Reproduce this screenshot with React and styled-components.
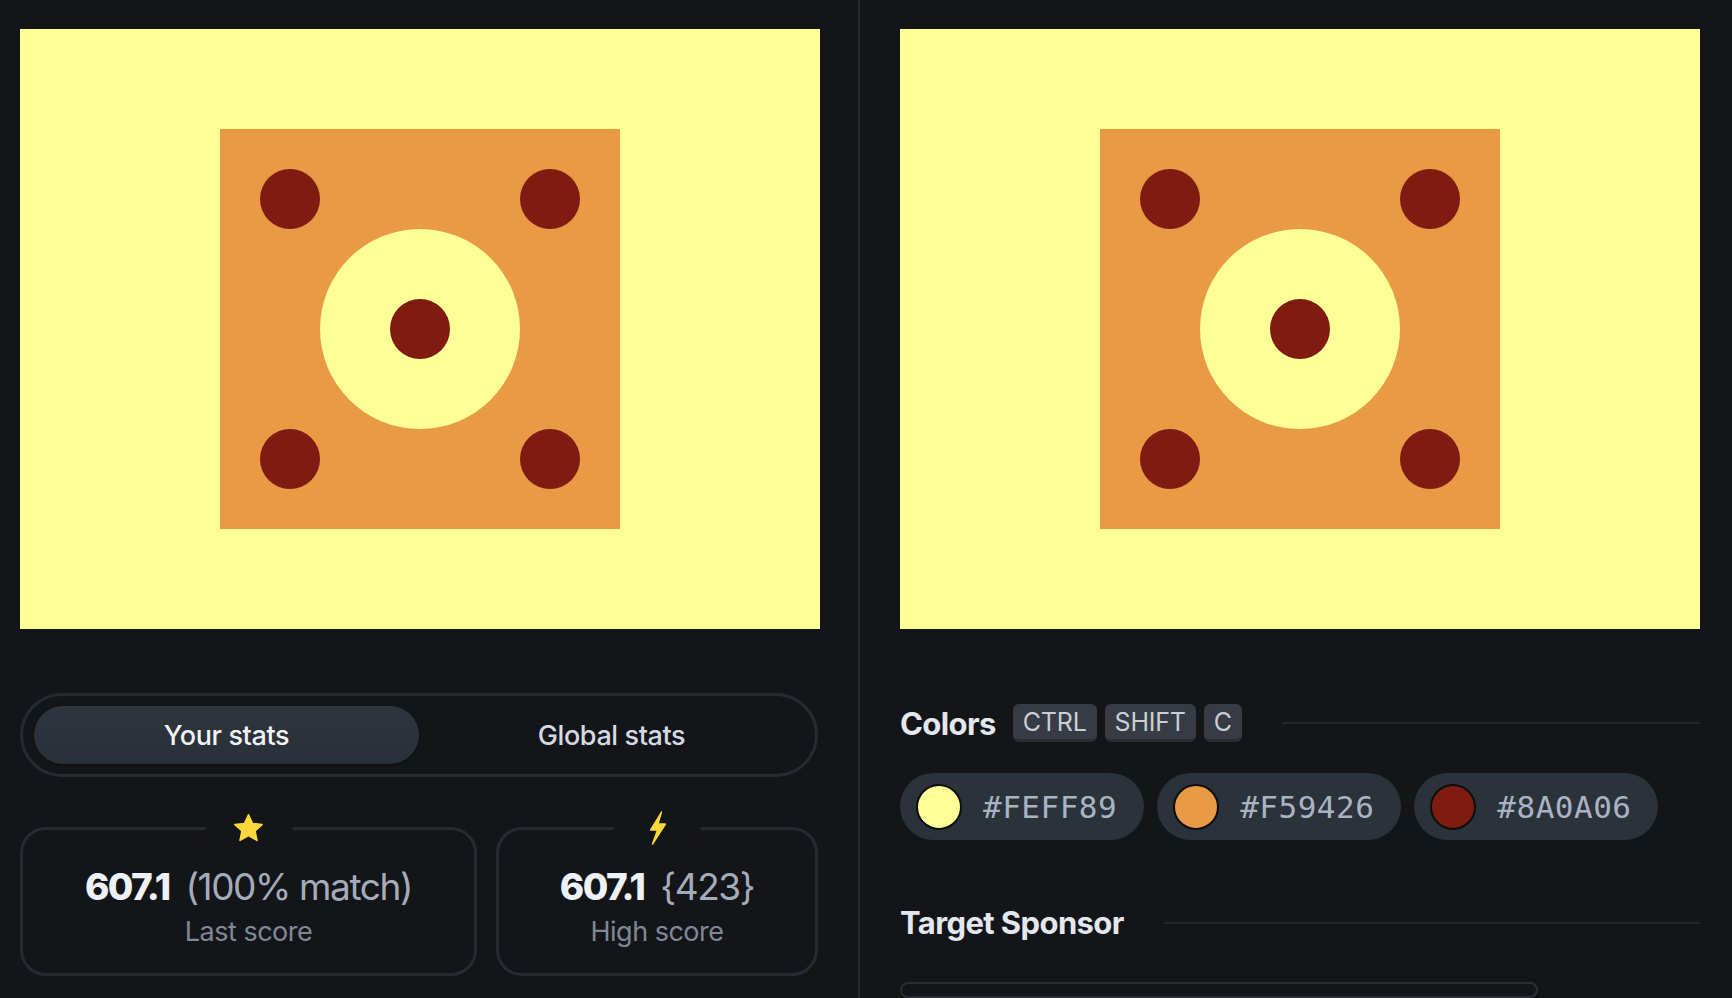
import React from 'react';
import styled, { createGlobalStyle } from 'styled-components';

const GlobalStyle = createGlobalStyle`
  html, body {
    margin: 0;
    padding: 0;
    background: #141519;
    overflow: hidden;
  }
  * {
    box-sizing: border-box;
  }
`;

const Page = styled.div`
  display: flex;
  width: 1732px;
  height: 998px;
  overflow: hidden;
  background: #141519;
  font-family: Inter, 'Noto Sans', sans-serif;
`;

const LeftColumn = styled.div`
  width: 858px;
  flex-shrink: 0;
  padding: 29px 40px 0 20px;
  display: flex;
  flex-direction: column;
`;

const Divider = styled.div`
  width: 2px;
  flex-shrink: 0;
  background: #252a31;
`;

const RightColumn = styled.div`
  flex: 1;
  padding: 29px 32px 0 40px;
  display: flex;
  flex-direction: column;
`;

const Canvas = styled.svg`
  display: block;
  width: 800px;
  height: 600px;
  flex-shrink: 0;
`;

const Tabs = styled.div`
  margin-top: 64px;
  width: 798px;
  height: 84px;
  border: 3px solid #262b32;
  border-radius: 42px;
  padding: 10px 11px;
  display: grid;
  grid-template-columns: 1fr 1fr;
`;

const Tab = styled.div`
  display: flex;
  align-items: center;
  justify-content: center;
  border-radius: 30px;
  font-size: 27px;
  font-weight: 500;
  letter-spacing: -0.4px;
  color: ${({ active }) => (active ? '#f1f3f6' : '#d5dae2')};
  background: ${({ active }) => (active ? 'linear-gradient(180deg, #2f353d 0%, #2a3038 100%)' : 'transparent')};
  box-shadow: ${({ active }) => (active ? '0 1px 2px rgba(0,0,0,0.4)' : 'none')};
`;

const Cards = styled.div`
  margin-top: 50px;
  display: grid;
  grid-template-columns: 457px 322px;
  gap: 19px;
`;

const Card = styled.div`
  position: relative;
  height: 149px;
  border: 3px solid #262b32;
  border-radius: 26px;
  display: flex;
  flex-direction: column;
  align-items: center;
  padding-top: 35px;
`;

const CardIcon = styled.div`
  position: absolute;
  top: -20px;
  left: 50%;
  transform: translateX(-50%);
  width: 87px;
  height: 36px;
  background: #141519;
  display: flex;
  align-items: center;
  justify-content: center;
`;

const ScoreLine = styled.div`
  display: flex;
  align-items: baseline;
  gap: 16px;
  line-height: 44px;
`;

const ScoreValue = styled.span`
  font-size: 37px;
  font-weight: 800;
  letter-spacing: -1.6px;
  color: #eef1f5;
`;

const ScoreExtra = styled.span`
  font-size: 37px;
  font-weight: 400;
  letter-spacing: -1.4px;
  color: #a4acb9;
`;

const ScoreLabel = styled.div`
  margin-top: 6px;
  font-size: 27px;
  line-height: 34px;
  letter-spacing: -0.5px;
  color: #7f8896;
`;

const SectionHeader = styled.div`
  display: flex;
  align-items: center;
  height: 38px;
  margin-top: ${({ top }) => top}px;
`;

const SectionTitle = styled.h2`
  margin: 0;
  font-size: 31px;
  font-weight: 700;
  letter-spacing: -0.6px;
  color: #e3e7ee;
`;

const Keys = styled.div`
  display: flex;
  gap: 8px;
  margin-left: 17px;
`;

const Key = styled.kbd`
  display: flex;
  align-items: center;
  justify-content: center;
  min-width: 38px;
  height: 38px;
  padding: 0 10px;
  border-radius: 6px;
  background: #373c44;
  border-bottom: 3px solid #2a2e34;
  font-family: Inter, 'Noto Sans', sans-serif;
  font-size: 25px;
  letter-spacing: -0.2px;
  color: #c9ced7;
`;

const Rule = styled.div`
  flex: 1;
  height: 2px;
  background: #23272d;
  margin-left: ${({ gap }) => gap}px;
`;

const Chips = styled.div`
  display: flex;
  gap: 13px;
  margin-top: 31px;
`;

const Chip = styled.div`
  display: flex;
  align-items: center;
  height: 67px;
  padding: 0 27px 0 16px;
  border-radius: 34px;
  background: #2b323a;
  gap: 21px;
`;

const Swatch = styled.span`
  width: 46px;
  height: 46px;
  border-radius: 50%;
  border: 2px solid #0d0e10;
  background: ${({ color }) => color};
`;

const HexCode = styled.span`
  font-family: 'DejaVu Sans Mono', 'Liberation Mono', monospace;
  font-size: 31px;
  letter-spacing: 0.5px;
  color: #a9b3c4;
`;

const SponsorBox = styled.div`
  margin-top: 41px;
  width: 638px;
  height: 120px;
  border: 2px solid #2a2e34;
  border-radius: 14px;
`;

const Artwork = () => (
  <Canvas viewBox="0 0 800 600">
    <rect width="800" height="600" fill="#FFFF98" />
    <rect x="200" y="100" width="400" height="400" fill="#E89A44" />
    <circle cx="270" cy="170" r="30" fill="#7F1B11" />
    <circle cx="530" cy="170" r="30" fill="#7F1B11" />
    <circle cx="270" cy="430" r="30" fill="#7F1B11" />
    <circle cx="530" cy="430" r="30" fill="#7F1B11" />
    <circle cx="400" cy="300" r="100" fill="#FFFF98" />
    <circle cx="400" cy="300" r="30" fill="#7F1B11" />
  </Canvas>
);

const StarIcon = () => (
  <svg width="34" height="32" viewBox="0 0 24 23">
    <path
      d="M12 2l2.9 6.26 6.85.74-5.1 4.63 1.43 6.74L12 16.9l-6.08 3.47 1.43-6.74L2.25 9l6.85-.74z"
      fill="#FBD83A"
      stroke="#FBD83A"
      strokeWidth="1.2"
      strokeLinejoin="round"
    />
  </svg>
);

const BoltIcon = () => (
  <svg width="20" height="34" viewBox="0 0 20 34">
    <path
      d="M14 1L3 19h7l-5 14L18 13h-7.5L14 1z"
      fill="#FBD83A"
      stroke="#FBD83A"
      strokeWidth="1.4"
      strokeLinejoin="round"
    />
  </svg>
);

const colors = [
  { hex: '#FEFF89', swatch: '#FFFF98' },
  { hex: '#F59426', swatch: '#E89A44' },
  { hex: '#8A0A06', swatch: '#7F1B11' },
];

const App = () => (
  <Page>
    <GlobalStyle />
    <LeftColumn>
      <Artwork />
      <Tabs>
        <Tab active>Your stats</Tab>
        <Tab>Global stats</Tab>
      </Tabs>
      <Cards>
        <Card>
          <CardIcon>
            <StarIcon />
          </CardIcon>
          <ScoreLine>
            <ScoreValue>607.1</ScoreValue>
            <ScoreExtra>(100% match)</ScoreExtra>
          </ScoreLine>
          <ScoreLabel>Last score</ScoreLabel>
        </Card>
        <Card>
          <CardIcon>
            <BoltIcon />
          </CardIcon>
          <ScoreLine>
            <ScoreValue>607.1</ScoreValue>
            <ScoreExtra>{'{423}'}</ScoreExtra>
          </ScoreLine>
          <ScoreLabel>High score</ScoreLabel>
        </Card>
      </Cards>
    </LeftColumn>
    <Divider />
    <RightColumn>
      <Artwork />
      <SectionHeader top={75}>
        <SectionTitle>Colors</SectionTitle>
        <Keys>
          <Key>CTRL</Key>
          <Key>SHIFT</Key>
          <Key>C</Key>
        </Keys>
        <Rule gap={40} />
      </SectionHeader>
      <Chips>
        {colors.map((c) => (
          <Chip key={c.hex}>
            <Swatch color={c.swatch} />
            <HexCode>{c.hex}</HexCode>
          </Chip>
        ))}
      </Chips>
      <SectionHeader top={64}>
        <SectionTitle>Target Sponsor</SectionTitle>
        <Rule gap={40} />
      </SectionHeader>
      <SponsorBox />
    </RightColumn>
  </Page>
);

export default App;
